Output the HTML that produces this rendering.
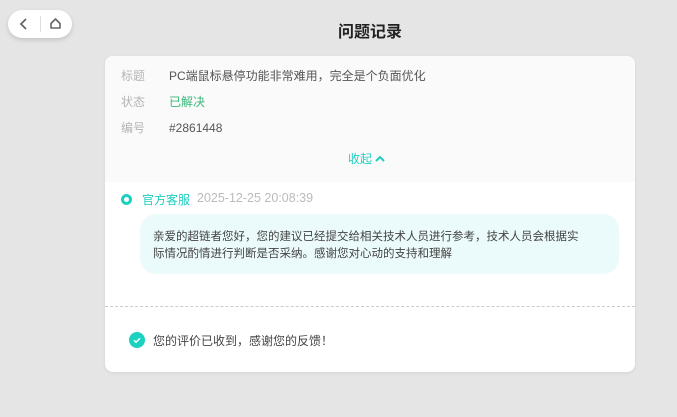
<!DOCTYPE html>
<html><head><meta charset="utf-8"><style>
*{margin:0;padding:0;box-sizing:border-box}
body{width:677px;height:417px;background:#e5e5e5;font-family:"Liberation Sans","Noto Sans CJK SC",sans-serif;position:relative;overflow:hidden;color:#333}
.pill{position:absolute;left:8px;top:10px;width:64px;height:28px;background:#fff;border-radius:14px;box-shadow:0 2px 5px rgba(0,0,0,.15)}
.pill .sep{position:absolute;left:32px;top:6px;width:1px;height:16px;background:#ddd}
h1{position:absolute;left:0;width:740px;top:18px;text-align:center;font-size:16px;font-weight:bold;color:#222}
.card{position:absolute;left:105px;top:56px;width:530px;height:316px;background:#fff;border-radius:8px;overflow:hidden;box-shadow:0 1px 3px rgba(0,0,0,.08)}
.top{position:absolute;left:0;top:0;width:530px;height:126px;background:#fafafa}
.row{position:absolute;left:16px;font-size:12px;line-height:16px}
.row .l{display:inline-block;width:48px;color:#b5b5b5}
.row .v{color:#555}
.fold{position:absolute;left:243px;top:94px;font-size:12px;color:#1ecfc0}
.dot{position:absolute;left:16px;top:138px;width:11px;height:11px;border-radius:50%;border:3px solid #1dd1c1;background:#fff}
.who{position:absolute;left:37px;top:135px;font-size:12px;color:#1ecfc0}
.time{position:absolute;left:92px;top:135px;font-size:12.5px;color:#bbb}
.bubble{position:absolute;left:35px;top:158px;width:479px;height:60px;background:#ebfafa;border-radius:16px;padding:15px 0 0 13px;font-size:11.5px;line-height:17px;color:#444;white-space:nowrap}
.dash{position:absolute;left:0;top:250px;width:530px;border-top:1px dashed #ccc}
.chk{position:absolute;left:24px;top:276px;width:16px;height:16px;border-radius:50%;background:#1dd1c1}
.ok{position:absolute;left:48px;top:276px;font-size:12px;color:#444}
</style></head><body>
<div class="pill">
<svg style="position:absolute;left:10px;top:8px" width="12" height="12" viewBox="0 0 12 12"><path d="M8 1L3 6l5 5" fill="none" stroke="#666" stroke-width="1.8"/></svg>
<div class="sep"></div>
<svg style="position:absolute;left:41px;top:7px" width="13" height="13" viewBox="0 0 13 13"><path d="M2 6.5L6.5 2l4.5 4.5V11H2z" fill="none" stroke="#666" stroke-width="1.6" stroke-linejoin="round"/></svg>
</div>
<h1>问题记录</h1>
<div class="card">
<div class="top">
<div class="row" style="top:12px"><span class="l">标题</span><span class="v">PC端鼠标悬停功能非常难用，完全是个负面优化</span></div>
<div class="row" style="top:38px"><span class="l">状态</span><span class="v" style="color:#3ab87a">已解决</span></div>
<div class="row" style="top:64px"><span class="l">编号</span><span class="v">#2861448</span></div>
<div class="fold">收起 <svg width="10" height="8" viewBox="0 0 10 8"><path d="M1 6l4-4 4 4" fill="none" stroke="#1ecfc0" stroke-width="2"/></svg></div>
</div>
<div class="dot"></div>
<div class="who">官方客服</div>
<div class="time">2025-12-25 20:08:39</div>
<div class="bubble">亲爱的超链者您好，您的建议已经提交给相关技术人员进行参考，技术人员会根据实<br>际情况酌情进行判断是否采纳。感谢您对心动的支持和理解</div>
<div class="dash"></div>
<div class="chk"><svg width="16" height="16" viewBox="0 0 16 16"><path d="M5 8.2l2 2 4-4" fill="none" stroke="#fff" stroke-width="1.4"/></svg></div>
<div class="ok">您的评价已收到，感谢您的反馈！</div>
</div>
</body></html>
